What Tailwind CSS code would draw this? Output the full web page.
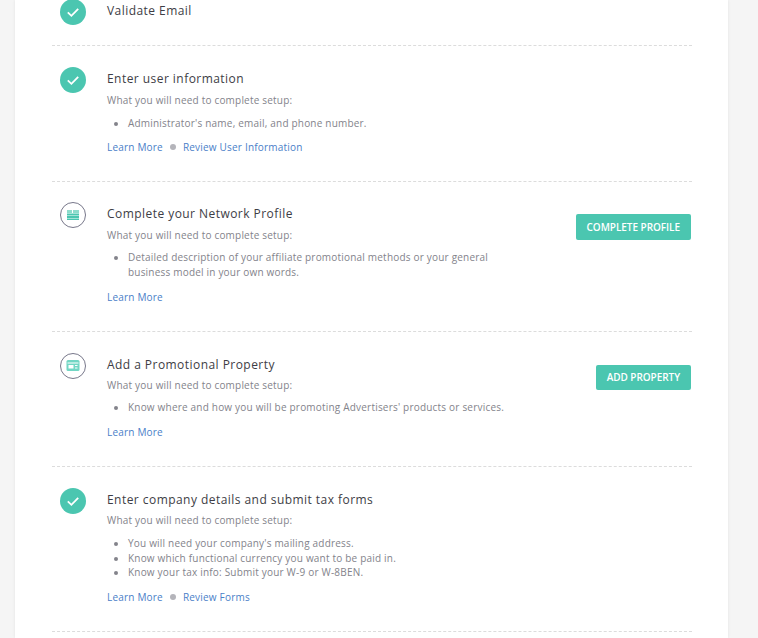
<!DOCTYPE html>
<html lang="en">

<head>
    <meta charset="UTF-8">
    <title>Network Setup</title>
    <script src="https://cdn.jsdelivr.net/npm/@tailwindcss/browser@4"></script>
</head>

<body class="h-[638px] overflow-hidden bg-[#f5f5f5] font-['Open_Sans',sans-serif]">
    <main class="ml-[15px] w-[713px] h-[638px] overflow-hidden bg-white px-[37px] shadow-[0_0_3px_rgba(0,0,0,0.08)]">
        <div class="w-[640px] -mt-[22px]">

            <!-- Validate Email -->
            <section class="flex h-[68px] pt-[21px] border-b border-dashed border-[#dcdcdc]">
                <div class="w-[55px] pl-[8px] shrink-0">
                    <svg class="w-[26px] h-[26px]" viewBox="0 0 26 26"><circle cx="13" cy="13" r="13" fill="#4bc6b0"/><path d="M7.8 13.4l3.6 3.4 6.8-6.9" fill="none" stroke="#fff" stroke-width="1.8"/></svg>
                </div>
                <h2 class="text-[12px] leading-[20px] tracking-[0.45px] font-medium text-[#3d3d45] mt-[2px]">Validate Email</h2>
            </section>

            <!-- Enter user information -->
            <section class="flex pt-[21px] h-[136px] border-b border-dashed border-[#dcdcdc]">
                <div class="w-[55px] pl-[8px] shrink-0">
                    <svg class="w-[26px] h-[26px]" viewBox="0 0 26 26"><circle cx="13" cy="13" r="13" fill="#4bc6b0"/><path d="M7.8 13.4l3.6 3.4 6.8-6.9" fill="none" stroke="#fff" stroke-width="1.8"/></svg>
                </div>
                <div>
                    <h2 class="text-[12px] leading-[20px] tracking-[0.45px] font-medium text-[#3d3d45] mt-[2px]">Enter user information</h2>
                    <p class="text-[10px] leading-[14px] tracking-[0.2px] text-[#83838b] mt-[4px]">What you will need to complete setup:</p>
                    <ul class="list-disc pl-[21px] mt-[9px] text-[10px] leading-[14.5px] tracking-[0.2px] text-[#83838b] w-[400px]">
                        <li>Administrator's name, email, and phone number.</li>
                    </ul>
                    <div class="flex items-center mt-[9px] text-[10px] leading-[14px] tracking-[0.2px] text-[#4a80c8]">
                        <a href="#">Learn More</a>
                        <span class="w-[6px] h-[6px] rounded-full bg-[#b4b4ba] mx-[7px]"></span>
                        <a href="#">Review User Information</a>
                    </div>
                </div>
            </section>

            <!-- Complete your Network Profile -->
            <section class="flex pt-[20px] h-[150px] border-b border-dashed border-[#dcdcdc]">
                <div class="w-[55px] pl-[8px] shrink-0">
                    <svg class="w-[26px] h-[26px]" viewBox="0 0 26 26"><circle cx="13" cy="13" r="12.5" fill="#fff" stroke="#77778a"/><path d="M7 8h5v3H7zM13 8h6v3h-6z" fill="#8ddccc"/><path d="M7 11.5h12v2H7zM7 14h12v2H7zM7 16.5h12v1.5H7z" fill="#4bc6b0"/></svg>
                </div>
                <div class="w-[400px]">
                    <h2 class="text-[12px] leading-[20px] tracking-[0.45px] font-medium text-[#3d3d45] mt-[2px]">Complete your Network Profile</h2>
                    <p class="text-[10px] leading-[14px] tracking-[0.2px] text-[#83838b] mt-[4px]">What you will need to complete setup:</p>
                    <ul class="list-disc pl-[21px] mt-[8px] text-[10px] leading-[14.5px] tracking-[0.2px] text-[#83838b]">
                        <li>Detailed description of your affiliate promotional methods or your general business model in your own words.</li>
                    </ul>
                    <div class="mt-[11px] text-[10px] leading-[14px] tracking-[0.2px] text-[#4a80c8]"><a href="#">Learn More</a></div>
                </div>
                <a href="#" class="ml-auto mt-[12px] mr-px self-start h-[26px] px-[11px] rounded-[2px] bg-[#4bc6b0] text-white text-[10px] font-semibold leading-[26px] tracking-[-0.05px]">COMPLETE PROFILE</a>
            </section>

            <!-- Add a Promotional Property -->
            <section class="flex pt-[21px] h-[135px] border-b border-dashed border-[#dcdcdc]">
                <div class="w-[55px] pl-[8px] shrink-0">
                    <svg class="w-[26px] h-[26px]" viewBox="0 0 26 26"><circle cx="13" cy="13" r="12.5" fill="#fff" stroke="#77778a"/><rect x="6.5" y="7" width="13" height="11" rx="1.5" fill="#72d6c4"/><path d="M7.5 10h11" stroke="#fff"/><path d="M8.5 12h5v3.5h-5zM15 12h2.5v1h-2.5zM15 14.5h2.5v1h-2.5z" fill="#fff"/></svg>
                </div>
                <div class="w-[420px]">
                    <h2 class="text-[12px] leading-[20px] tracking-[0.45px] font-medium text-[#3d3d45] mt-[2px]">Add a Promotional Property</h2>
                    <p class="text-[10px] leading-[14px] tracking-[0.2px] text-[#83838b] mt-[3px]">What you will need to complete setup:</p>
                    <ul class="list-disc pl-[21px] mt-[8px] text-[10px] leading-[14.5px] tracking-[0.2px] text-[#83838b]">
                        <li>Know where and how you will be promoting Advertisers' products or services.</li>
                    </ul>
                    <div class="mt-[10px] text-[10px] leading-[14px] tracking-[0.2px] text-[#4a80c8]"><a href="#">Learn More</a></div>
                </div>
                <a href="#" class="ml-auto mt-[12px] mr-px self-start h-[25px] px-[11px] rounded-[2px] bg-[#4bc6b0] text-white text-[10px] font-semibold leading-[25px] tracking-[-0.05px]">ADD PROPERTY</a>
            </section>

            <!-- Enter company details and submit tax forms -->
            <section class="flex pt-[21px] h-[165px] border-b border-dashed border-[#dcdcdc]">
                <div class="w-[55px] pl-[8px] shrink-0">
                    <svg class="w-[26px] h-[26px]" viewBox="0 0 26 26"><circle cx="13" cy="13" r="13" fill="#4bc6b0"/><path d="M7.8 13.4l3.6 3.4 6.8-6.9" fill="none" stroke="#fff" stroke-width="1.8"/></svg>
                </div>
                <div>
                    <h2 class="text-[12px] leading-[20px] tracking-[0.45px] font-medium text-[#3d3d45] mt-[2px]">Enter company details and submit tax forms</h2>
                    <p class="text-[10px] leading-[14px] tracking-[0.2px] text-[#83838b] mt-[3px]">What you will need to complete setup:</p>
                    <ul class="list-disc pl-[21px] mt-[9px] text-[10px] leading-[14.5px] tracking-[0.2px] text-[#83838b]">
                        <li>You will need your company's mailing address.</li>
                        <li>Know which functional currency you want to be paid in.</li>
                        <li>Know your tax info: Submit your W-9 or W-8BEN.</li>
                    </ul>
                    <div class="flex items-center mt-[10px] text-[10px] leading-[14px] tracking-[0.2px] text-[#4a80c8]">
                        <a href="#">Learn More</a>
                        <span class="w-[6px] h-[6px] rounded-full bg-[#b4b4ba] mx-[7px]"></span>
                        <a href="#">Review Forms</a>
                    </div>
                </div>
            </section>

        </div>
    </main>
</body>

</html>
